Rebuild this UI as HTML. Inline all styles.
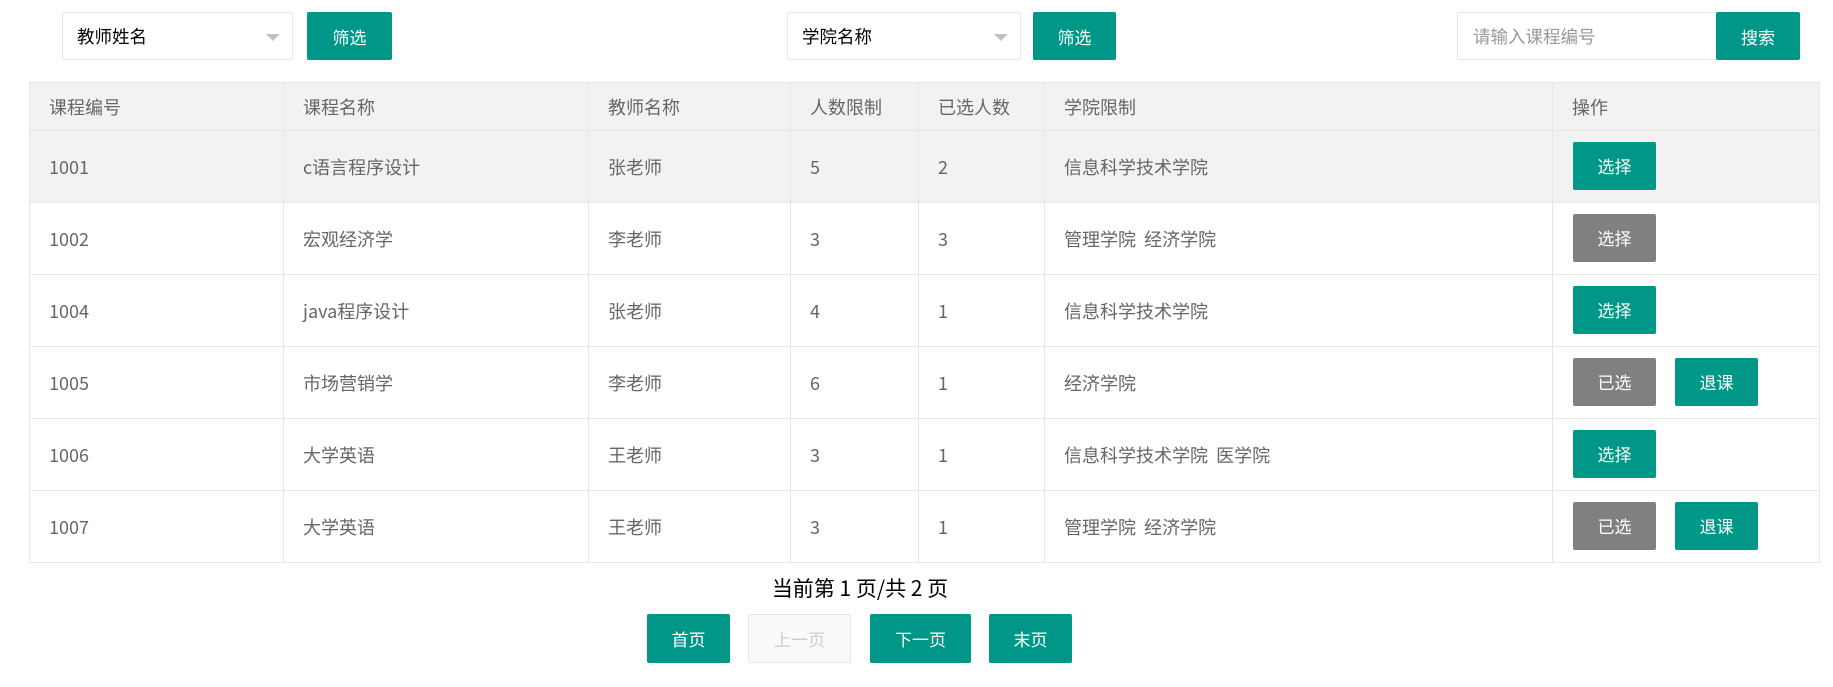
<!DOCTYPE html>
<html><head><meta charset="utf-8"><style>
*{box-sizing:border-box;margin:0;padding:0}
body{width:1833px;height:687px;background:#fff;font-family:"Noto Sans CJK SC","Liberation Sans",sans-serif;font-size:18px;color:#666;position:relative;overflow:hidden}
.abs{position:absolute}
.sel{border:1px solid #e6e6e6;border-radius:2px;background:#fff;color:#000;font-size:17.5px;padding-left:14px;display:flex;align-items:center}
.sel .arr{position:absolute;right:12px;top:21px;width:0;height:0;border-left:7px solid transparent;border-right:7px solid transparent;border-top:7px solid #c2c2c2}
.btn{background:#009688;color:#fff;border-radius:2px;display:flex;align-items:center;justify-content:center;font-size:17px}
.gray{background:#808080}
table{position:absolute;left:29px;top:82px;border-collapse:collapse;table-layout:fixed;width:1790px}
td{border:1px solid #e6e6e6;padding-left:19px;height:72px;vertical-align:middle;position:relative;line-height:22px}
tr.h td{height:48px;background:#f2f2f2}
tr.g td{background:#f2f2f2}
td .btn{position:absolute;top:11px;width:83px;height:48px}
</style></head><body>
<div class="abs sel" style="left:62px;top:12px;width:231px;height:48px">教师姓名<span class="arr"></span></div>
<div class="abs btn" style="left:307px;top:12px;width:85px;height:48px">筛选</div>
<div class="abs sel" style="left:787px;top:12px;width:234px;height:48px">学院名称<span class="arr"></span></div>
<div class="abs btn" style="left:1033px;top:12px;width:83px;height:48px">筛选</div>
<div class="abs sel" style="left:1457px;top:12px;width:260px;height:48px;color:#999;padding-left:15px">请输入课程编号</div>
<div class="abs btn" style="left:1716px;top:12px;width:84px;height:48px">搜索</div>
<table>
<colgroup><col style="width:254px"><col style="width:305px"><col style="width:202px"><col style="width:128px"><col style="width:126px"><col style="width:508px"><col style="width:267px"></colgroup>
<tr class="h"><td>课程编号</td><td>课程名称</td><td>教师名称</td><td>人数限制</td><td>已选人数</td><td>学院限制</td><td>操作</td></tr>
<tr class="g"><td>1001</td><td>c语言程序设计</td><td>张老师</td><td>5</td><td>2</td><td>信息科学技术学院</td><td><div class="btn" style="left:20px">选择</div></td></tr>
<tr><td>1002</td><td>宏观经济学</td><td>李老师</td><td>3</td><td>3</td><td>管理学院&nbsp; 经济学院</td><td><div class="btn gray" style="left:20px">选择</div></td></tr>
<tr><td>1004</td><td>java程序设计</td><td>张老师</td><td>4</td><td>1</td><td>信息科学技术学院</td><td><div class="btn" style="left:20px">选择</div></td></tr>
<tr><td>1005</td><td>市场营销学</td><td>李老师</td><td>6</td><td>1</td><td>经济学院</td><td><div class="btn gray" style="left:20px">已选</div><div class="btn" style="left:122px">退课</div></td></tr>
<tr><td>1006</td><td>大学英语</td><td>王老师</td><td>3</td><td>1</td><td>信息科学技术学院&nbsp; 医学院</td><td><div class="btn" style="left:20px">选择</div></td></tr>
<tr><td>1007</td><td>大学英语</td><td>王老师</td><td>3</td><td>1</td><td>管理学院&nbsp; 经济学院</td><td><div class="btn gray" style="left:20px">已选</div><div class="btn" style="left:122px">退课</div></td></tr>
</table>
<div class="abs" style="left:700px;width:320px;top:574px;text-align:center;font-size:21px;color:#000;line-height:28px">当前第 1 页/共 2 页</div>
<div class="abs btn" style="left:647px;top:614px;width:83px;height:49px">首页</div>
<div class="abs btn" style="left:748px;top:614px;width:103px;height:49px;background:#fafafa;border:1px solid #e6e6e6;color:#ccc">上一页</div>
<div class="abs btn" style="left:870px;top:614px;width:101px;height:49px">下一页</div>
<div class="abs btn" style="left:989px;top:614px;width:83px;height:49px">末页</div>
</body></html>
